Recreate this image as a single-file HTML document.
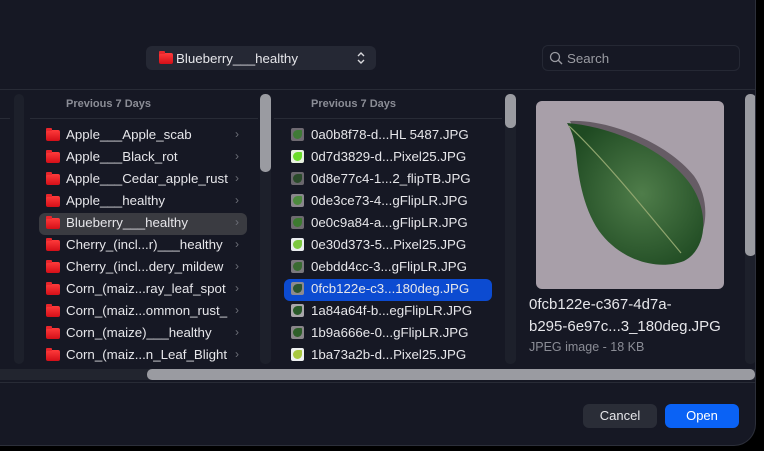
<!DOCTYPE html>
<html><head><meta charset="utf-8">
<style>
*{margin:0;padding:0;box-sizing:border-box}
body{width:764px;height:451px;background:#000;overflow:hidden;font-family:"Liberation Sans",Helvetica,Arial,sans-serif;position:relative}
#win{position:absolute;left:0;top:-30px;width:756px;height:476px;background:#161824;border-radius:0 22px 22px 0;border:1px solid #2c2f3a;border-left:none;overflow:hidden}
.a{position:absolute}
.txt{color:#e6e6ea;font-size:13.3px;white-space:nowrap}
.hdr{color:#8b8d96;font-size:11px;font-weight:bold}
.folder{position:absolute;width:14px;height:11px;background:linear-gradient(#ff3b3b,#d40f18);border-radius:2px}
.folder:before{content:"";position:absolute;left:0;top:-2px;width:6px;height:3px;background:#e8262c;border-radius:1px 1px 0 0}
.chev{position:absolute;color:#6c6e77;font-size:12px}
.thumb{position:absolute;width:13px;height:13px;border-radius:2px;background:#7d7a80;overflow:hidden}
.sbt{position:absolute;background:#1d202b;border-radius:5px}
.sb{position:absolute;background:#9a9ba1;border-radius:5px}
</style></head><body>
<div id="win">
<div style="position:absolute;top:30px;left:0;width:756px;height:446px">
<div class="a" style="left:146px;top:45px;width:230px;height:24px;background:#252834;border-radius:6px"></div>
<div class="folder" style="left:159px;top:52px"></div>
<div class="a txt" style="left:176px;top:50px;font-size:13.3px">Blueberry___healthy</div>
<svg class="a" style="left:356px;top:50px" width="10" height="14" viewBox="0 0 10 14"><path d="M2 5 L5 2 L8 5 M2 9 L5 12 L8 9" stroke="#d8d8dc" stroke-width="1.4" fill="none"/></svg>
<div class="a" style="left:542px;top:44px;width:198px;height:26px;border:1px solid #252834;border-radius:6px;background:#161824"></div>
<svg class="a" style="left:549px;top:50px" width="14" height="14" viewBox="0 0 14 14"><circle cx="6" cy="6" r="4.5" stroke="#9a9ba2" stroke-width="1.3" fill="none"/><path d="M9.3 9.3 L13 13" stroke="#9a9ba2" stroke-width="1.4"/></svg>
<div class="a" style="left:567px;top:50px;color:#9a9ba2;font-size:13.3px">Search</div>
<div class="a" style="left:0;top:88px;width:756px;height:1px;background:#282b36"></div>
<div class="a" style="left:0;top:381px;width:756px;height:1px;background:#282b36"></div>
<div class="sbt" style="left:14px;top:93px;width:10px;height:270px"></div>
<div class="a" style="left:0;top:117px;width:10px;height:1px;background:#282b36"></div>
<div class="a hdr" style="left:66px;top:97px">Previous 7 Days</div>
<div class="a" style="left:30px;top:117px;width:228px;height:1px;background:#282b36"></div>
<div class="sbt" style="left:260px;top:93px;width:11px;height:270px"></div>
<div class="sb" style="left:260px;top:93px;width:11px;height:78px"></div>
<div class="a" style="left:39px;top:212px;width:208px;height:22px;background:#3a3b41;border-radius:6px"></div>
<div class="a hdr" style="left:311px;top:97px">Previous 7 Days</div>
<div class="a" style="left:274px;top:117px;width:228px;height:1px;background:#282b36"></div>
<div class="sbt" style="left:505px;top:93px;width:11px;height:270px"></div>
<div class="sb" style="left:505px;top:93px;width:11px;height:34px"></div>
<div class="a" style="left:284px;top:278px;width:208px;height:22px;background:#0c4bd1;border-radius:6px"></div>
<div class="sbt" style="left:745px;top:93px;width:11px;height:270px"></div>
<div class="sb" style="left:745px;top:93px;width:11px;height:162px"></div>
<svg class="a" style="left:536px;top:100px" width="188" height="188" viewBox="0 0 188 188">
<defs><clipPath id="c"><rect width="188" height="188" rx="6"/></clipPath>
<radialGradient id="g" cx="0.55" cy="0.5" r="0.6"><stop offset="0" stop-color="#4f7d4a"/><stop offset="1" stop-color="#1f4a22"/></radialGradient></defs>
<g clip-path="url(#c)">
<rect width="188" height="188" fill="#a89fa9"/>
<path d="M34 20 C70 18 130 40 158 75 C176 100 172 140 150 150 C125 160 90 150 70 120 C55 95 50 60 46 45Z" fill="#3a3038" opacity="0.6"/>
<path d="M31 22 C70 25 125 45 152 80 C174 108 172 148 148 160 C122 170 85 160 63 130 C46 105 42 72 40 52 C39 40 36 30 31 22Z" fill="url(#g)"/>
<path d="M33 25 C70 60 110 110 145 152" stroke="#8fa56e" stroke-width="1.2" fill="none"/>
</g></svg>
<div class="a txt" style="left:529px;top:293px;font-size:15px;line-height:22px;color:#e6e6ea">0fcb122e-c367-4d7a-<br>b295-6e97c...3_180deg.JPG</div>
<div class="a" style="left:529px;top:339px;font-size:12.5px;color:#8b8d96">JPEG image - 18 KB</div>
<div class="a" style="left:0;top:368px;width:756px;height:11px;background:#22252f"></div>
<div class="sb" style="left:147px;top:368px;width:608px;height:11px"></div>
<div class="a" style="left:583px;top:403px;width:74px;height:24px;background:#2a2d37;border-radius:6px;color:#e6e6ea;font-size:13px;text-align:center;line-height:24px">Cancel</div>
<div class="a" style="left:665px;top:403px;width:74px;height:24px;background:#0a62f5;border-radius:6px;color:#fff;font-size:13px;text-align:center;line-height:24px">Open</div>
<div id="c1"></div>
<script>
var n1=["Apple___Apple_scab","Apple___Black_rot","Apple___Cedar_apple_rust","Apple___healthy","Blueberry___healthy","Cherry_(incl...r)___healthy","Cherry_(incl...dery_mildew","Corn_(maiz...ray_leaf_spot","Corn_(maiz...ommon_rust_","Corn_(maize)___healthy","Corn_(maiz...n_Leaf_Blight"];
var n2=["0a0b8f78-d...HL 5487.JPG","0d7d3829-d...Pixel25.JPG","0d8e77c4-1...2_flipTB.JPG","0de3ce73-4...gFlipLR.JPG","0e0c9a84-a...gFlipLR.JPG","0e30d373-5...Pixel25.JPG","0ebdd4cc-3...gFlipLR.JPG","0fcb122e-c3...180deg.JPG","1a84a64f-b...egFlipLR.JPG","1b9a666e-0...gFlipLR.JPG","1ba73a2b-d...Pixel25.JPG"];
var bg=["#6f6a72","#e8f0e0","#6a676d","#8a878c","#6e6b70","#e9ecee","#7b787d","#8d8a8f","#a9a6aa","#8a868a","#eef0f0"];
var fg=["#3f7a36","#6bdc2a","#2a4a2a","#4d8a3e","#3d7a30","#7cc840","#3a6b32","#2c5530","#2a5a2a","#2f5f2a","#a8c840"];
var h="";
for(var i=0;i<11;i++){var y=127+i*22;
h+='<div class="folder" style="left:46px;top:'+(y+2)+'px"></div><div class="a txt" style="left:66px;top:'+(y-1)+'px">'+n1[i]+'</div><div class="chev" style="left:235px;top:'+(y-1)+'px">&#8250;</div>';
h+='<div class="thumb" style="left:291px;top:'+y+'px;background:'+bg[i]+'"><div style="position:absolute;left:2px;top:2px;width:9px;height:9px;border-radius:50% 10% 50% 50%;background:'+fg[i]+'"></div></div><div class="a txt" style="left:311px;top:'+(y-1)+'px">'+n2[i]+'</div>';}
document.getElementById("c1").innerHTML=h;
</script>
</div></div>
</body></html>
